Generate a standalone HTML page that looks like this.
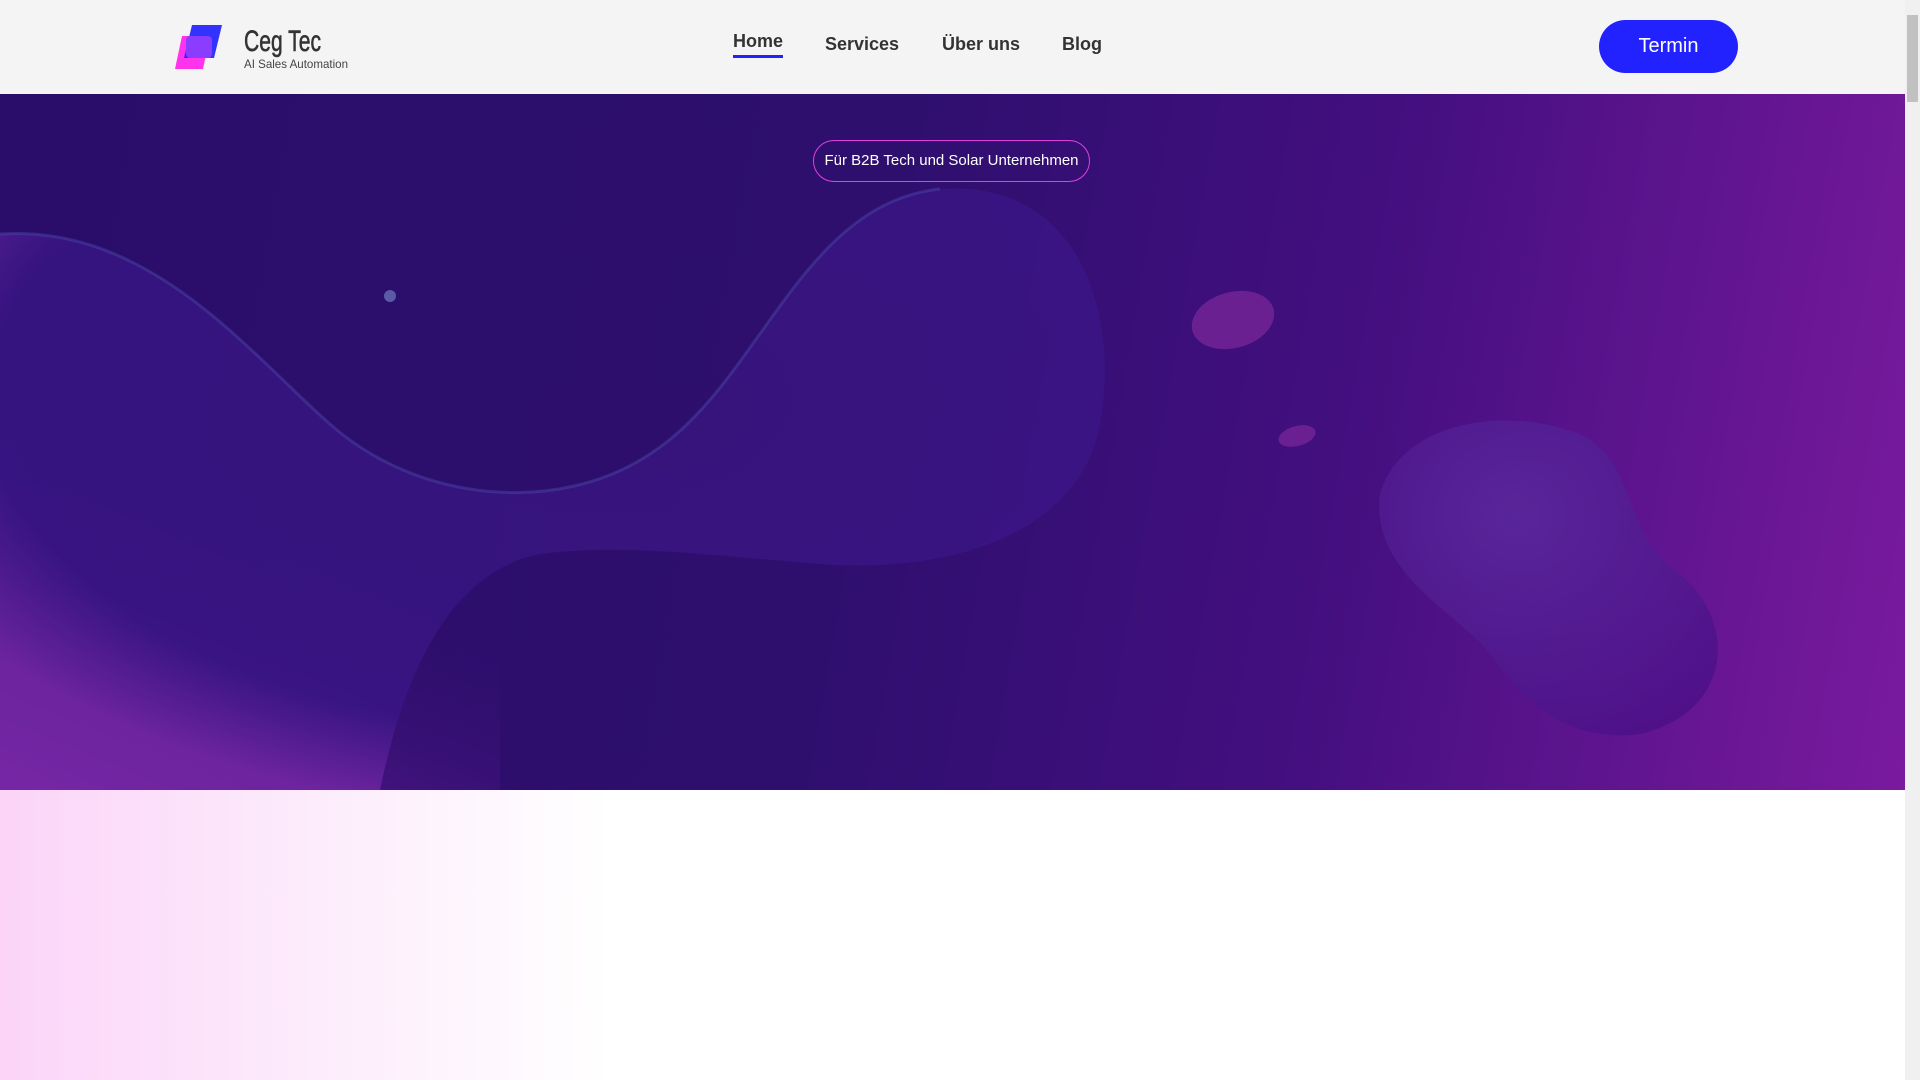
<!DOCTYPE html>
<html><head><meta charset="utf-8"><style>
html,body{margin:0;padding:0;width:1920px;height:1080px;overflow:hidden;font-family:"Liberation Sans",sans-serif;background:#fff}
.hdr{position:absolute;left:0;top:0;width:1905px;height:94px;background:#f4f4f4}
.nav a{position:absolute;font-size:18px;font-weight:bold;color:#333;text-decoration:none}
.btn{position:absolute;left:1599px;top:20px;width:139px;height:53px;border-radius:27px;background:#2222ff;color:#fff;font-size:20px;text-align:center;line-height:53px}
.hero{position:absolute;left:0;top:94px;width:1905px;height:696px;overflow:hidden;background:linear-gradient(100deg,#2a0d6a 0%,#2e0f6e 45%,#440f80 70%,#7a1a9e 100%)}
.badge{position:absolute;left:813px;top:46px;width:275px;height:40px;border:1.5px solid #e040e0;border-radius:21px;color:#fff;font-size:15px;text-align:center;line-height:40px}
.low{position:absolute;left:0;top:790px;width:1905px;height:290px;background:linear-gradient(90deg,#fbd4f8 0%,#fdeefc 18%,#fff 32%,#fff 100%)}
.sb{position:absolute;left:1905px;top:0;width:15px;height:1080px;background:#f0f0f0}
.sb div{position:absolute;left:2px;top:15px;width:11px;height:87px;background:#c1c1c1}
</style></head><body>
<div class="hdr">
<svg style="position:absolute;left:172px;top:22px" width="180" height="50">
<polygon points="10,14 38,14 31,47 3,47" fill="#ff33ee"/>
<polygon points="20,3 50,3 42,36 12,36" fill="#2222ff" opacity="0.92"/>
<rect x="14" y="14" width="26" height="22" rx="4" fill="#8a3cff"/>
<text x="72" y="29" font-family="Liberation Sans" font-size="30" fill="#333" stroke="#333" stroke-width="0.6" textLength="77" lengthAdjust="spacingAndGlyphs">Ceg Tec</text>
<text x="72" y="46" font-family="Liberation Sans" font-size="12" fill="#444" textLength="104" lengthAdjust="spacingAndGlyphs">AI Sales Automation</text>
</svg>
<div class="nav"><a style="left:733px;top:31px">Home</a><a style="left:825px;top:34px">Services</a><a style="left:942px;top:34px">Über uns</a><a style="left:1062px;top:34px">Blog</a></div>
<div style="position:absolute;left:733px;top:55px;width:50px;height:3px;background:#2222ff"></div>
<div class="btn">Termin</div>
</div>
<div class="hero">
<svg width="1905" height="696" style="position:absolute;left:0;top:0">
<defs>
<radialGradient id="g1" cx="0.55" cy="0.35" r="0.7"><stop offset="0" stop-color="#3a1580"/><stop offset="0.8" stop-color="#3a1688"/><stop offset="1" stop-color="#7a2aa8"/></radialGradient>
<radialGradient id="g2" cx="0.4" cy="0.3" r="0.8"><stop offset="0" stop-color="#5a2a9e"/><stop offset="1" stop-color="#4a0f86"/></radialGradient>
<linearGradient id="g4" x1="0" y1="1" x2="0.3" y2="0"><stop offset="0" stop-color="#6a1a9a"/><stop offset="0.5" stop-color="#2e0f6e" stop-opacity="0"/></linearGradient>
</defs>
<rect width="500" height="696" fill="url(#g4)"/>
<path d="M0,140 C150,130 250,260 330,330 C420,410 560,420 650,360 C760,290 800,110 940,95 C1080,85 1120,220 1100,330 C1080,440 950,480 820,470 C700,460 620,450 540,460 C440,480 400,600 380,696 L0,696 Z" fill="url(#g1)" opacity="0.75"/>
<path d="M0,140 C150,130 250,260 330,330 C420,410 560,420 650,360 C760,290 800,110 940,95" fill="none" stroke="#5050b0" stroke-width="3" opacity="0.4"/>
<path d="M1380,400 C1400,330 1500,310 1580,340 C1640,370 1620,440 1680,480 C1740,530 1730,620 1640,640 C1560,650 1520,600 1490,560 C1460,520 1370,480 1380,400 Z" fill="url(#g2)" opacity="0.8"/>
<ellipse cx="1233" cy="226" rx="42" ry="28" fill="#6a2090" transform="rotate(-15 1233 226)"/>
<ellipse cx="1297" cy="342" rx="19" ry="10" fill="#6a2090" transform="rotate(-15 1297 342)"/>
<circle cx="390" cy="202" r="6" fill="#5a5aa8"/>
</svg>
<div class="badge">Für B2B Tech und Solar Unternehmen</div>
</div>
<div class="low"></div>
<div class="sb"><div></div></div>
</body></html>
